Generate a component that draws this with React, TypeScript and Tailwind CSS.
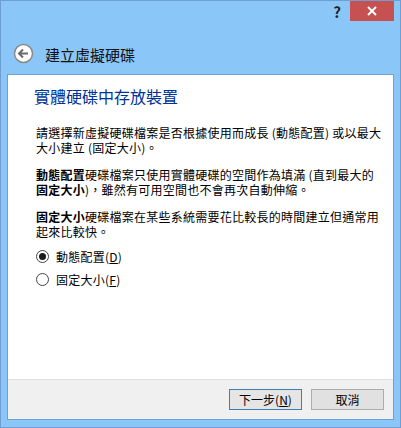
import React from 'react';

const font = { fontFamily: '"Noto Sans CJK TC", "Liberation Sans", sans-serif' };

const Radio: React.FC<{ checked?: boolean; label: string; accel: string }> = ({ checked, label, accel }) => (
  <div className="flex items-center h-[23px]">
    <span className="w-[13px] h-[13px] rounded-full border border-[#444] bg-white flex items-center justify-center">
      {checked && <span className="w-[7px] h-[7px] rounded-full bg-[#1a1a1a]" />}
    </span>
    <span className="ml-[7px] text-[12px] leading-[15px] text-black">
      {label}(<span className="underline">{accel}</span>)
    </span>
  </div>
);

export default function App() {
  return (
    <div
      className="w-[401px] h-[428px] bg-[#8bc6f8] border border-[#6e9fd0] flex flex-col"
      style={font}
    >
      {/* title bar */}
      <div className="h-[20px] flex justify-end pr-[6px]">
        <div className="w-[26px] flex items-center justify-center text-[15px] font-bold text-[#222] leading-none pt-[1px]">?</div>
        <div className="w-[44px] bg-[#c75050] flex items-center justify-center">
          <svg width="10" height="10" viewBox="0 0 10 10">
            <path d="M1 1 L9 9 M9 1 L1 9" stroke="white" strokeWidth="2" />
          </svg>
        </div>
      </div>

      {/* header */}
      <div className="h-[53px] flex items-center pl-[12px] pt-[12px]">
        <svg width="21" height="21" viewBox="0 0 21 21">
          <circle cx="10.5" cy="10.5" r="9" fill="white" stroke="#8a8a8a" strokeWidth="1.5" />
          <path d="M6 10.5 H15 M10 6.5 L6 10.5 L10 14.5" fill="none" stroke="#6a6a6a" strokeWidth="2" />
        </svg>
        <span className="ml-[11px] pt-[3px] text-[15px] text-[#111]">建立虛擬硬碟</span>
      </div>

      {/* panel */}
      <div className="flex-1 mx-[6px] mb-[7px] border border-[#6ea0d2] flex flex-col bg-white">
        <div className="flex-1 pl-[26px] pr-[4px] pt-[10px]">
          <div className="text-[16px] leading-[22px] text-[#003399]">實體硬碟中存放裝置</div>
          <div className="pl-[2px] pt-[18px] text-[12px] leading-[15px] tracking-[0.25px] text-black whitespace-nowrap">
            <div className="flex flex-col gap-[12px]">
              <p className="h-[30px]">
                請選擇新虛擬硬碟檔案是否根據使用而成長 (動態配置) 或以最大
                <br />
                大小建立 (固定大小)。
              </p>
              <p className="h-[30px]">
                <b>動態配置</b>硬碟檔案只使用實體硬碟的空間作為填滿 (直到最大的
                <br />
                <b>固定大小</b>)，雖然有可用空間也不會再次自動伸縮。
              </p>
              <p className="h-[30px]">
                <b>固定大小</b>硬碟檔案在某些系統需要花比較長的時間建立但通常用
                <br />
                起來比較快。
              </p>
            </div>
            <div className="flex flex-col mt-[6px]">
              <Radio checked label="動態配置" accel="D" />
              <Radio label="固定大小" accel="F" />
            </div>
          </div>
        </div>
        <div className="h-[40px] bg-[#f0f0f0] border-t border-[#dfdfdf] flex items-center justify-end gap-[9px] pr-[9px]">
          <button className="w-[73px] h-[21px] border border-[#3c7fb1] bg-[#e5e5e5] text-[12px] text-black">
            下一步(<span className="underline">N</span>)
          </button>
          <button className="w-[73px] h-[21px] border border-[#adadad] bg-[#e1e1e1] text-[12px] text-black">
            取消
          </button>
        </div>
      </div>
    </div>
  );
}
